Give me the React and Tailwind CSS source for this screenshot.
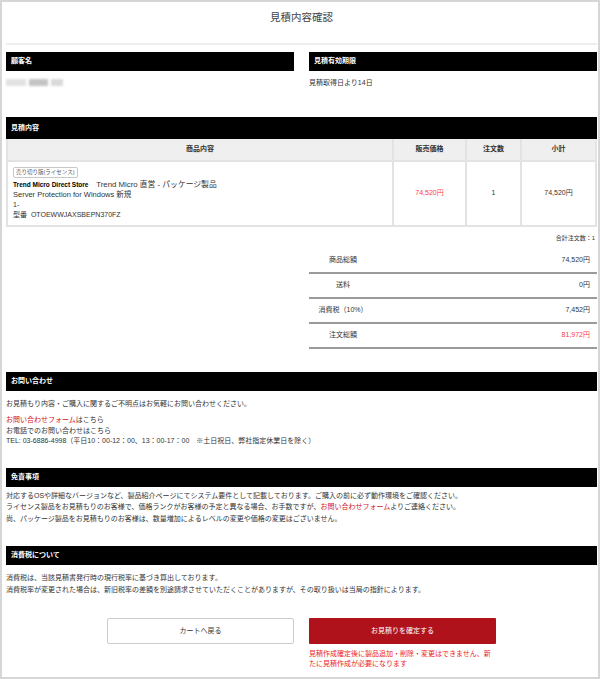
export default function App() {
  const bar = "h-[19px] bg-black text-white font-bold text-[7px] flex items-center pl-[5px]";
  const line = "border-r-2 border-[#e3e3e3]";

  return (
    <div className="w-[600px] h-[679px] bg-white border-2 border-[#d6d6d6] pl-[4px] pr-[1px] text-[#333] text-[7px] font-['Liberation_Sans','Noto_Sans_CJK_JP',sans-serif]">
      {/* title */}
      <div className="pt-[8px] text-center text-[10.5px] leading-[14px] text-[#444]">見積内容確認</div>
      <div className="mt-[19px] h-[2px] bg-[#eeeeee]" />

      {/* customer / validity */}
      <div className="mt-[7px] grid grid-cols-2 gap-x-[15px]">
        <div>
          <div className={bar}>顧客名</div>
          <div className="mt-[6px] h-[11px] flex items-center gap-[3px]">
            <div className="w-[20px] h-[7px] bg-[#e2e2e2] blur-[1px]" />
            <div className="w-[19px] h-[7px] bg-[#c4c4c4] blur-[1px]" />
            <div className="w-[12px] h-[7px] bg-[#dadada] blur-[1px]" />
          </div>
        </div>
        <div>
          <div className={bar}>見積有効期限</div>
          <div className="mt-[6px] leading-[11px]">見積取得日より14日</div>
        </div>
      </div>

      {/* quote contents */}
      <div className="mt-[29px] h-[22px] bg-black text-white font-bold flex items-center pl-[5px]">見積内容</div>
      <div className="border-x-2 border-b-2 border-[#e3e3e3]">
        <div className="grid grid-cols-[386px_73px_55px_1fr] h-[21px] bg-[#efefef] font-bold">
          <div className={`flex items-center justify-center ${line}`}>商品内容</div>
          <div className={`flex items-center justify-center ${line}`}>販売価格</div>
          <div className={`flex items-center justify-center ${line}`}>注文数</div>
          <div className="flex items-center justify-center">小計</div>
        </div>
        <div className="grid grid-cols-[386px_73px_55px_1fr] h-[65px] border-t-2 border-[#e3e3e3]">
          <div className={`pl-[5px] flex flex-col justify-center ${line}`}>
            <div>
              <span className="inline-block border border-[#c8c8c8] rounded-[2px] px-[2px] text-[5.5px] leading-[9px] text-[#555]">売り切り版(ライセンス)</span>
            </div>
            <div className="mt-[2px] leading-[10px]">
              <span className="font-bold text-[6.5px] text-black">Trend Micro Direct Store</span>
              <span className="text-[7.8px]">　Trend Micro 直営 - パッケージ製品</span>
            </div>
            <div className="leading-[10px] text-[7.5px]">Server Protection for Windows 新規</div>
            <div className="leading-[10px]">1-</div>
            <div className="leading-[10px]">型番&nbsp;&nbsp;OTOEWWJAXSBEPN370FZ</div>
          </div>
          <div className={`flex items-center justify-center text-[#ff3b3b] ${line}`}>74,520円</div>
          <div className={`flex items-center justify-center ${line}`}>1</div>
          <div className="flex items-center justify-center">74,520円</div>
        </div>
      </div>

      <div className="mt-[7px] text-right text-[6px] leading-[8px] pr-[2px]">合計注文数：1</div>

      {/* totals */}
      <div className="mt-[7px] ml-auto w-[288px]">
        {[
          ["商品総額", "74,520円", false],
          ["送料", "0円", false],
          ["消費税（10%）", "7,452円", false],
          ["注文総額", "81,972円", true],
        ].map(([label, value, red]) => (
          <div key={label} className="h-[25px] border-b-2 border-[#9a9a9a] flex items-center">
            <div className="w-[68px] text-center">{label}</div>
            <div className={`flex-1 text-right pr-[7px] ${red ? "text-[#ff3b3b]" : ""}`}>{value}</div>
          </div>
        ))}
      </div>

      {/* contact */}
      <div className={`mt-[23px] ${bar}`}>お問い合わせ</div>
      <p className="mt-[7px] leading-[11px]">お見積もり内容・ご購入に関するご不明点はお気軽にお問い合わせください。</p>
      <div className="mt-[6px] leading-[10.5px]">
        <p><span className="text-[#d0121b]">お問い合わせフォーム</span>はこちら</p>
        <p>お電話でのお問い合わせはこちら</p>
        <p>TEL: 03-6886-4998（平日10：00-12：00、13：00-17：00　※土日祝日、弊社指定休業日を除く）</p>
      </div>

      {/* disclaimer */}
      <div className={`mt-[21px] ${bar}`}>免責事項</div>
      <div className="mt-[3px] leading-[11.5px]">
        <p>対応するOSや詳細なバージョンなど、製品紹介ページにてシステム要件として記載しております。ご購入の前に必ず動作環境をご確認ください。</p>
        <p>ライセンス製品をお見積もりのお客様で、価格ランクがお客様の予定と異なる場合、お手数ですが、<span className="text-[#d0121b]">お問い合わせフォーム</span>よりご連絡ください。</p>
        <p>尚、パッケージ製品をお見積もりのお客様は、数量増加によるレベルの変更や価格の変更はございません。</p>
      </div>

      {/* tax */}
      <div className={`mt-[22px] ${bar}`}>消費税について</div>
      <div className="mt-[7px] leading-[11.5px]">
        <p>消費税は、当該見積書発行時の現行税率に基づき算出しております。</p>
        <p>消費税率が変更された場合は、新旧税率の差額を別途請求させていただくことがありますが、その取り扱いは当局の指針によります。</p>
      </div>

      {/* actions */}
      <div className="mt-[23px] flex justify-center gap-[15px]">
        <button className="w-[187px] h-[26px] self-start border border-[#cccccc] rounded-[2px] bg-white text-[7px] text-[#333]">カートへ戻る</button>
        <div className="w-[187px]">
          <button className="w-full h-[26px] bg-[#b0121b] rounded-[1px] text-[7px] text-white">お見積りを確定する</button>
          <p className="mt-[5px] leading-[10px] text-[#ee1c25]">見積作成確定後に製品追加・削除・変更はできません、新たに見積作成が必要になります</p>
        </div>
      </div>
    </div>
  );
}
